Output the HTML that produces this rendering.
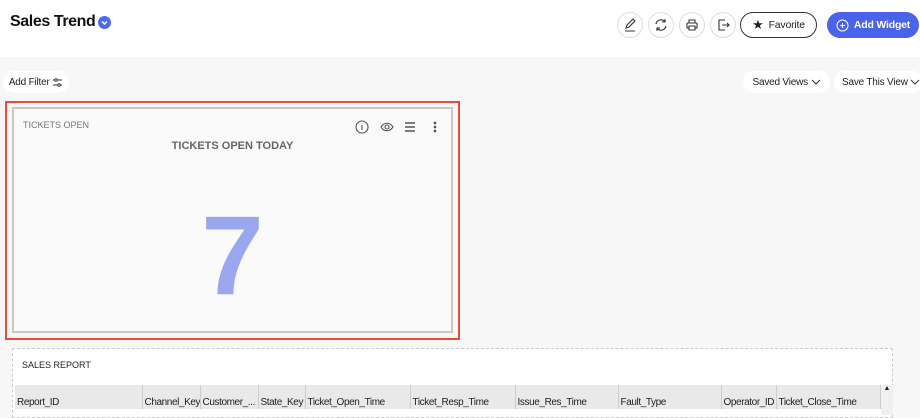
<!DOCTYPE html>
<html><head><style>
*{box-sizing:border-box;margin:0;padding:0}
body{width:920px;height:407px;overflow:hidden;background:#f7f7f7;font-family:"Liberation Sans",sans-serif;position:relative;color:#222}
.top{position:absolute;left:0;top:0;width:920px;height:57px;background:#fff}
.abs{position:absolute}
.cb{position:absolute;top:12px;width:26px;height:26px;border:1px solid #ddd;border-radius:50%;background:#fff;display:flex;align-items:center;justify-content:center}
.pill{position:absolute;background:#fff;border-radius:14px;font-size:10px;display:flex;align-items:center;justify-content:center;color:#222;white-space:nowrap;letter-spacing:-0.2px}
th{font-weight:normal;text-align:left;font-size:10px;padding:0 2px;border-right:1px solid #ccc;height:24px;vertical-align:bottom;padding-bottom:1px;letter-spacing:-0.4px;white-space:nowrap;overflow:hidden}
</style></head><body>
<div class="top"></div>
<div class="abs" style="left:10px;top:13px;font-size:16px;font-weight:bold;color:#111;letter-spacing:-0.4px">Sales Trend</div>
<div class="abs" style="left:98px;top:16px;width:13px;height:13px;border-radius:50%;background:#4a6cf0"><svg width="13" height="13"><path d="M4 5.5l2.5 2.5 2.5-2.5" stroke="#fff" stroke-width="1.4" fill="none"/></svg></div>

<div class="cb" style="left:617px"><svg width="14" height="14" viewBox="0 0 14 14" fill="none" stroke="#333" stroke-width="1.1"><path d="M3 10l1-3 6-6 2 2-6 6-3 1zM2 13h10"/></svg></div>
<div class="cb" style="left:648px"><svg width="14" height="14" viewBox="0 0 14 14" fill="none" stroke="#333" stroke-width="1.1"><path d="M2 6a5 5 0 0 1 9-2M12 8a5 5 0 0 1-9 2M11 1v3h-3M3 13v-3h3"/></svg></div>
<div class="cb" style="left:679px"><svg width="14" height="14" viewBox="0 0 14 14" fill="none" stroke="#333" stroke-width="1.1"><path d="M4 5V2h6v3M3 5h8a1 1 0 0 1 1 1v4h-2M4 10H2V6a1 1 0 0 1 1-1M4 8h6v4H4z"/></svg></div>
<div class="cb" style="left:710px"><svg width="14" height="14" viewBox="0 0 14 14" fill="none" stroke="#333" stroke-width="1.1"><path d="M9 2H3v10h6M6 7h7M11 5l2 2-2 2"/></svg></div>
<div class="abs" style="left:740px;top:12px;width:77px;height:26px;border:1px solid #333;border-radius:13px;background:#fff;font-size:10.5px;display:flex;align-items:center;justify-content:center;gap:5px;letter-spacing:-0.2px"><span style="font-size:13px">★</span>Favorite</div>
<div class="abs" style="left:827px;top:12px;width:92px;height:26px;border-radius:13px;background:#4a63e8;color:#fff;font-size:10.5px;font-weight:bold;display:flex;align-items:center;justify-content:center;gap:5px;letter-spacing:-0.2px"><svg width="13" height="13"><circle cx="6.5" cy="6.5" r="5.5" fill="none" stroke="#fff"/><path d="M6.5 4v5M4 6.5h5" stroke="#fff"/></svg>Add Widget</div>

<div class="pill" style="left:3px;top:71px;width:66px;height:22px">Add Filter&nbsp;<svg width="11" height="11" fill="none" stroke="#333"><path d="M1 3h9M1 8h9"/><circle cx="4" cy="3" r="1.3" fill="#fff"/><circle cx="7" cy="8" r="1.3" fill="#fff"/></svg></div>
<div class="pill" style="left:743px;top:71px;width:87px;height:22px">Saved Views&nbsp;<svg width="10" height="6"><path d="M1 1l4 4 4-4" stroke="#333" fill="none"/></svg></div>
<div class="pill" style="left:834px;top:71px;width:90px;height:22px;justify-content:flex-start;padding-left:8px">Save This View&nbsp;<svg width="10" height="6"><path d="M1 1l4 4 4-4" stroke="#333" fill="none"/></svg></div>

<div class="abs" style="left:5px;top:101px;width:455px;height:239px;border:2px solid #e74c3c"></div>
<div class="abs" style="left:12px;top:107px;width:441px;height:226px;border:2px solid #c8c8c8;background:#fafafa">
<div class="abs" style="left:9px;top:11px;font-size:9px;color:#777">TICKETS OPEN</div>
<div class="abs" style="left:0;width:437px;top:31px;text-align:center;font-size:11px;font-weight:bold;color:#666">TICKETS OPEN TODAY</div>
<svg class="abs" style="left:341px;top:10px" width="82" height="16" fill="none" stroke="#555" stroke-width="1.1"><circle cx="7" cy="8" r="6"/><path d="M7 6v5M7 4v0.5"/><path d="M26 8c3-5 9-5 12 0c-3 5-9 5-12 0z"/><circle cx="32" cy="8" r="2"/><path d="M50 4h10M50 8h10M50 12h10" stroke-width="1.4"/><circle cx="80" cy="4" r="0.8" fill="#555"/><circle cx="80" cy="8" r="0.8" fill="#555"/><circle cx="80" cy="12" r="0.8" fill="#555"/></svg>
<div class="abs" style="left:0;width:437px;top:92px;text-align:center;font-size:112px;font-weight:bold;color:#9aa6ee;line-height:110px">7</div>
</div>

<div class="abs" style="left:12px;top:348px;width:881px;height:70px;border:1px dashed #ccc;background:#fff">
<div class="abs" style="left:9px;top:11px;font-size:9px;color:#222">SALES REPORT</div>
<table class="abs" style="left:2px;top:36px;border-collapse:collapse;background:#e9e9e9;width:866px;table-layout:fixed">
<tr><th style="width:127px">Report_ID</th><th style="width:58px">Channel_Key</th><th style="width:58px">Customer_...</th><th style="width:47px">State_Key</th><th style="width:105px">Ticket_Open_Time</th><th style="width:105px">Ticket_Resp_Time</th><th style="width:103px">Issue_Res_Time</th><th style="width:103px">Fault_Type</th><th style="width:55px">Operator_ID</th><th>Ticket_Close_Time</th></tr></table>
<div class="abs" style="left:868px;top:36px;width:12px;height:30px;background:#f0f0f0;font-size:7px;text-align:center">▲</div>
</div>
</body></html>
